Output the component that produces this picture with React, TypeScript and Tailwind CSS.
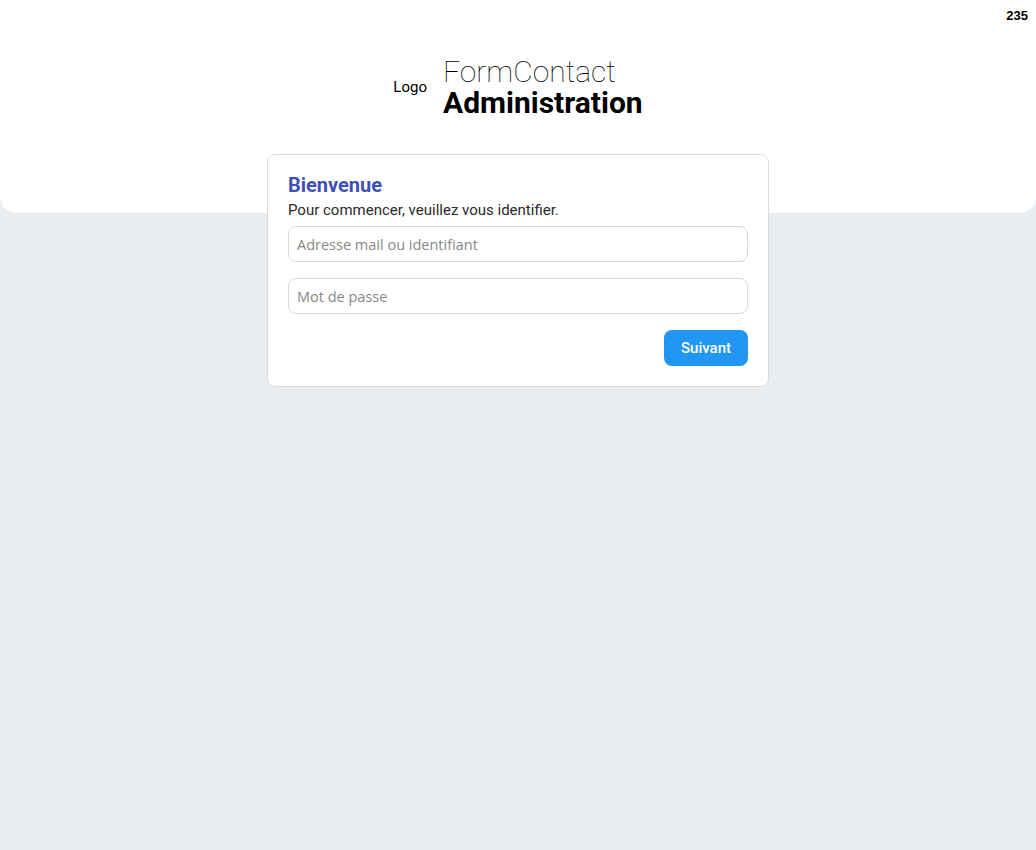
export default function App() {
  return (
    <div className="min-h-screen bg-[#eaedf0] font-['Roboto',sans-serif] text-[#222]">
      <div className="relative h-[213px] rounded-b-[16px] bg-white">
        <span className="absolute right-2 top-[6px] font-['Liberation_Sans',sans-serif] text-[13px] font-bold text-black">
          235
        </span>
        <div className="flex items-center justify-center gap-4 pt-[57px]">
          <span className="text-[15px] text-black">Logo</span>
          <div className="flex flex-col text-black">
            <span className="text-[30px] font-thin leading-[30px]">FormContact</span>
            <span className="text-[30px] font-bold leading-[31px]">Administration</span>
          </div>
        </div>
      </div>

      <div className="relative mx-auto -mt-[59px] w-[502px] rounded-lg border border-[#dcdcdc] bg-white px-5 pb-5 pt-[17px]">
        <h1 className="text-[20px] font-bold leading-[26px] text-[#3f51b5]">Bienvenue</h1>
        <p className="text-[15px] leading-[24px] text-[#2a2a2a]">
          Pour commencer, veuillez vous identifier.
        </p>
        <input
          className="mt-[4px] block h-9 w-full rounded-lg border border-[#d9d9d9] px-2 font-['Open_Sans',sans-serif] text-[14.5px] outline-none placeholder:text-[#888]"
          placeholder="Adresse mail ou identifiant"
        />
        <input
          type="password"
          className="mt-4 block h-9 w-full rounded-lg border border-[#d9d9d9] px-2 font-['Open_Sans',sans-serif] text-[14.5px] outline-none placeholder:text-[#888]"
          placeholder="Mot de passe"
        />
        <div className="mt-4 flex justify-end">
          <button className="h-9 w-[84px] rounded-lg bg-[#2196f3] text-[15px] font-medium text-white">
            Suivant
          </button>
        </div>
      </div>
    </div>
  );
}
